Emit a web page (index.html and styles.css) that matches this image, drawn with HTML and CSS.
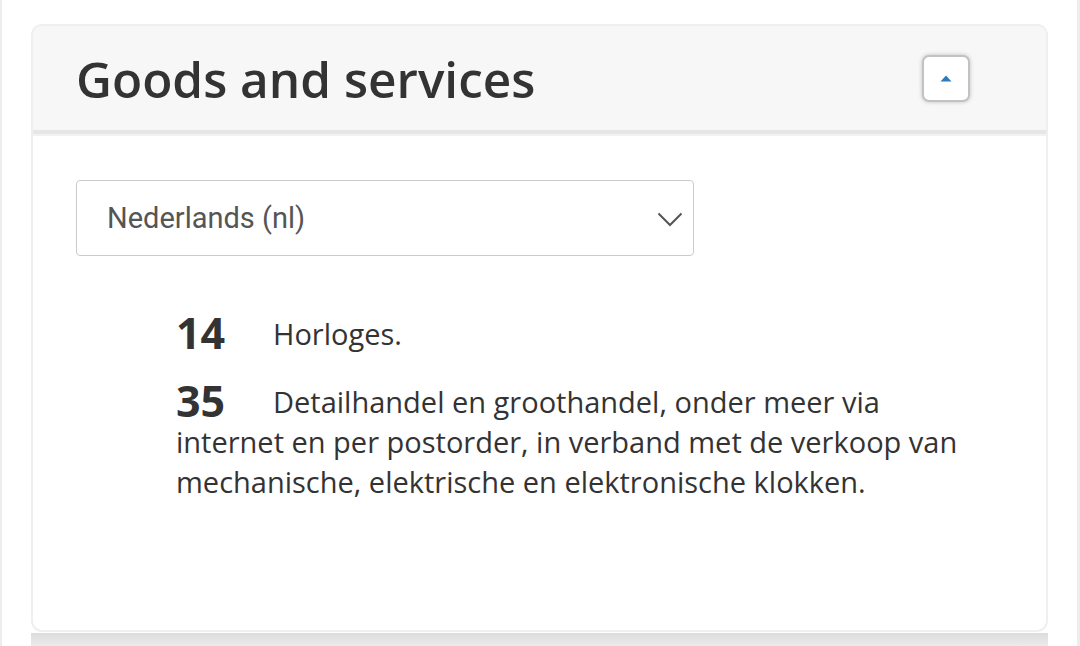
FILE: index.html
```html
<!DOCTYPE html>
<html lang="en">
<head>
<meta charset="utf-8">
<title>Goods and services</title>
<link rel="stylesheet" href="styles.css">
</head>
<body>
<div class="page">
  <section class="card">
    <header class="card-head">
      <h2 class="title">Goods and services</h2>
      <button class="toggle" aria-label="Collapse">
        <svg width="12" height="7" viewBox="0 0 12 7"><path d="M6 0.5 L11.5 6.5 L0.5 6.5 Z" fill="#2b7bbd"/></svg>
      </button>
    </header>
    <div class="card-body">
      <div class="select">
        <span class="select-text">Nederlands (nl)</span>
        <svg class="chev" width="26" height="15" viewBox="0 0 26 15"><path d="M1.5 1.5 L13 13 L24.5 1.5" fill="none" stroke="#555" stroke-width="2"/></svg>
      </div>
      <div class="classes">
        <p class="cls"><span class="num">14</span>Horloges.</p>
        <p class="cls"><span class="num">35</span>Detailhandel en groothandel, onder meer via internet en per postorder, in verband met de verkoop van mechanische, elektrische en elektronische klokken.</p>
      </div>
    </div>
  </section>
  <div class="next"></div>
</div>
</body>
</html>
```

FILE: styles.css
```css
html, body {
  margin: 0;
  padding: 0;
  background: #fff;
}
body {
  font-family: "Open Sans", "Liberation Sans", sans-serif;
  color: #333;
}
.page {
  height: 646px;
  box-sizing: border-box;
  border-left: 2px solid #ededed;
  border-right: 3px solid #ededed;
  padding: 24px 29px 0 29px;
  overflow: hidden;
}
.card {
  border: 2px solid #efefef;
  border-radius: 11px;
  height: 608px;
  box-sizing: border-box;
  overflow: hidden;
  background: #fff;
}
.card-head {
  height: 104px;
  background: #f7f7f7;
  border-bottom: 4px solid #e6e6e6;
  box-shadow: 0 2px 0 #f2f2f2;
  display: flex;
  align-items: center;
  justify-content: space-between;
  padding: 0 76px 0 43px;
  box-sizing: content-box;
}
.title {
  margin: 0;
  font-size: 49.5px;
  font-weight: 600;
  color: #333;
  line-height: 1;
  position: relative;
  top: 2px;
}
.toggle {
  width: 48px;
  height: 47px;
  box-sizing: border-box;
  border: 2px solid #c2c2c2;
  border-radius: 7px;
  background: #fff;
  box-shadow: 0 0 4px rgba(0,0,0,0.22);
  display: flex;
  align-items: center;
  justify-content: center;
  padding: 0;
}
.card-body {
  padding: 46px 43px 0 43px;
}
.select {
  width: 618px;
  height: 76px;
  box-sizing: border-box;
  border: 1.5px solid #cbcbcb;
  border-radius: 4px;
  display: flex;
  align-items: center;
  justify-content: space-between;
  padding: 0 10px 0 30px;
}
.select-text {
  font-family: Roboto, "Liberation Sans", sans-serif;
  font-size: 29px;
  color: #555;
}
.chev {
  position: relative;
  top: 1px;
}
.classes {
  padding: 53px 20px 0 100px;
}
.cls {
  margin: 0 0 23px 0;
  font-size: 29px;
  line-height: 40px;
  color: #333;
}
.num {
  display: inline-block;
  width: 97px;
  font-size: 43px;
  font-weight: 700;
  line-height: 40px;
  vertical-align: baseline;
  position: relative;
  top: 4px;
}
.next {
  height: 14px;
  margin-top: 1px;
  background: linear-gradient(#dcdcdc, #ececec);
}
```
